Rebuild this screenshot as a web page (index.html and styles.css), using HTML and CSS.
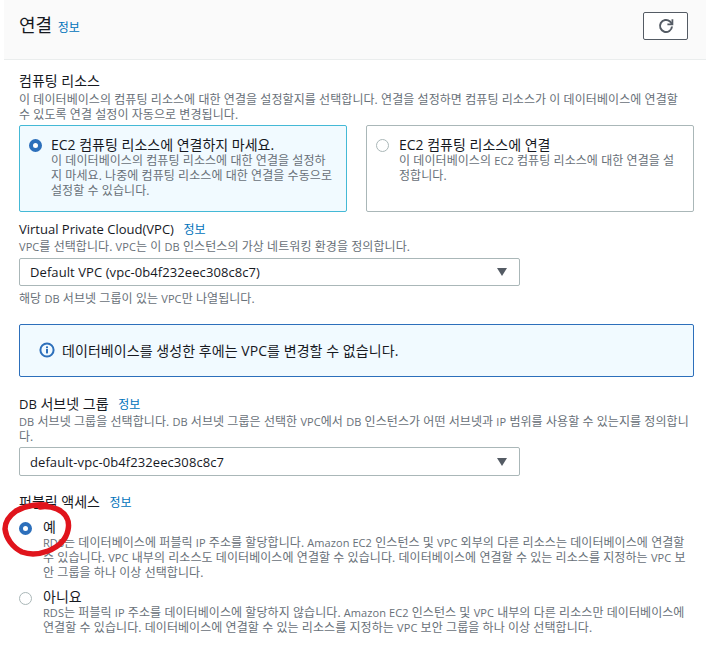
FILE: index.html
```html
<!DOCTYPE html>
<html lang="ko">
<head>
<meta charset="utf-8">
<title>연결</title>
<link rel="stylesheet" href="styles.css">
</head>
<body>
<div class="panel">
  <header class="head">
    <h2 class="title">연결 <a class="info info-head">정보</a></h2>
    <button class="refresh" aria-label="새로 고침">
      <svg width="16" height="16" viewBox="0 0 16 16" fill="none" stroke="#545b64" stroke-width="2"><path d="M14 8.5a6 6 0 1 1-2-5L14 6"/><path d="M14.4 1.2V6.4H9.4" stroke-width="1.8"/></svg>
    </button>
  </header>
  <div class="content">
    <section class="field f-compute">
      <div class="label">컴퓨팅 리소스</div>
      <p class="desc">이 데이터베이스의 컴퓨팅 리소스에 대한 연결을 설정할지를 선택합니다. 연결을 설정하면 컴퓨팅 리소스가 이 데이터베이스에 연결할<br>수 있도록 연결 설정이 자동으로 변경됩니다.</p>
      <div class="cards">
        <div class="card card-on">
          <span class="radio radio-on"></span>
          <div>
            <div class="opt">EC2 컴퓨팅 리소스에 연결하지 마세요.</div>
            <p class="desc">이 데이터베이스의 컴퓨팅 리소스에 대한 연결을 설정하<br>지 마세요. 나중에 컴퓨팅 리소스에 대한 연결을 수동으로<br>설정할 수 있습니다.</p>
          </div>
        </div>
        <div class="card card-off">
          <span class="radio"></span>
          <div>
            <div class="opt">EC2 컴퓨팅 리소스에 연결</div>
            <p class="desc">이 데이터베이스의 <span class="en">EC2</span> 컴퓨팅 리소스에 대한 연결을 설<br>정합니다.</p>
          </div>
        </div>
      </div>
    </section>
    <section class="field f-vpc">
      <div class="label"><span class="en">Virtual Private Cloud(VPC)</span> <a class="info">정보</a></div>
      <p class="desc"><span class="en">VPC</span>를 선택합니다. <span class="en">VPC</span>는 이 <span class="en">DB</span> 인스턴스의 가상 네트워킹 환경을 정의합니다.</p>
      <div class="select select-vpc"><span>Default VPC (vpc-0b4f232eec308c8c7)</span><i class="caret"></i></div>
      <p class="desc hint">해당 <span class="en">DB</span> 서브넷 그룹이 있는 <span class="en">VPC</span>만 나열됩니다.</p>
    </section>
    <div class="alert">
      <svg class="alert-icon" width="16" height="16" viewBox="0 0 16 16"><circle cx="8" cy="8" r="6.6" fill="none" stroke="#2c6fbb" stroke-width="2"/><rect x="7" y="7" width="2" height="4.4" fill="#2c6fbb"/><rect x="7" y="4.4" width="2" height="1.8" fill="#2c6fbb"/></svg>
      <span>데이터베이스를 생성한 후에는 VPC를 변경할 수 없습니다.</span>
    </div>
    <section class="field f-subnet">
      <div class="label"><span class="en">DB</span> 서브넷 그룹 <a class="info">정보</a></div>
      <p class="desc"><span class="en">DB</span> 서브넷 그룹을 선택합니다. <span class="en">DB</span> 서브넷 그룹은 선택한 <span class="en">VPC</span>에서 <span class="en">DB</span> 인스턴스가 어떤 서브넷과 <span class="en">IP</span> 범위를 사용할 수 있는지를 정의합니<br>다.</p>
      <div class="select"><span>default-vpc-0b4f232eec308c8c7</span><i class="caret"></i></div>
    </section>
    <section class="field f-public">
      <div class="label">퍼블릭 액세스 <a class="info">정보</a></div>
      <div class="choice">
        <span class="radio radio-on"></span>
        <div>
          <div class="opt">예</div>
          <p class="desc"><span class="en">RDS</span>는 데이터베이스에 퍼블릭 <span class="en">IP</span> 주소를 할당합니다. <span class="en">Amazon EC2</span> 인스턴스 및 <span class="en">VPC</span> 외부의 다른 리소스는 데이터베이스에 연결할<br>수 있습니다. <span class="en">VPC</span> 내부의 리소스도 데이터베이스에 연결할 수 있습니다. 데이터베이스에 연결할 수 있는 리소스를 지정하는 <span class="en">VPC</span> 보<br>안 그룹을 하나 이상 선택합니다.</p>
        </div>
      </div>
      <div class="choice choice-no">
        <span class="radio"></span>
        <div>
          <div class="opt">아니요</div>
          <p class="desc"><span class="en">RDS</span>는 퍼블릭 <span class="en">IP</span> 주소를 데이터베이스에 할당하지 않습니다. <span class="en">Amazon EC2</span> 인스턴스 및 <span class="en">VPC</span> 내부의 다른 리소스만 데이터베이스에<br>연결할 수 있습니다. 데이터베이스에 연결할 수 있는 리소스를 지정하는 <span class="en">VPC</span> 보안 그룹을 하나 이상 선택합니다.</p>
        </div>
      </div>
    </section>
  </div>
</div>
<svg class="scribble" width="76" height="60" viewBox="0 0 76 60" fill="none" stroke="#e0141c" stroke-width="5.5" stroke-linecap="round" stroke-linejoin="round"><path d="M46 5C36 4 25 6 16 11C9 16 5 22 5 29C6 38 12 47 22 52C30 55 40 54 48 51C58 47 66 40 68 30C70 21 66 13 57 9C52 7 46 6 40 7"/></svg>
</body>
</html>
```
FILE: styles.css
```css
* { box-sizing: border-box; }
html, body { margin: 0; padding: 0; }
body {
  width: 706px;
  height: 645px;
  overflow: hidden;
  position: relative;
  background: #fff;
  color: #16191f;
  font-family: "Open Sans", "Noto Sans CJK KR", sans-serif;
  font-size: 12px;
}
p { margin: 0; }
.panel { margin-left: 4px; }
.head {
  height: 60px;
  background: #fafafa;
  border-bottom: 1px solid #eaeded;
  padding: 12px 18px 0 15px;
  display: flex;
  justify-content: space-between;
  align-items: flex-start;
}
.title { margin: 2px 0 0; font-size: 18px; font-weight: 400; line-height: 22px; }
.info { color: #0073bb; font-size: 12px; margin-left: 6px; }
.info-head { margin-left: 1px; }
.refresh {
  width: 45px; height: 28px; padding: 0;
  background: #fff;
  border: 1px solid #545b64;
  border-radius: 2px;
  display: flex; align-items: center; justify-content: center;
}
.content { padding: 12px 12px 0 15px; }
.label { font-size: 14px; line-height: 18px; margin-bottom: 1px; }
.label .en { font-size: 13px; }
.desc { color: #687078; font-size: 12px; line-height: 14.7px; letter-spacing: .07px; white-space: nowrap; }
.desc .en { font-size: 11px; }
.f-compute .label { margin-bottom: 3px; }
.cards { display: flex; gap: 19px; margin-top: 3px; }
.card {
  width: 328px; height: 87px;
  border: 1px solid #aab7b8;
  border-radius: 2px;
  padding: 10px 12px 0 9px;
  display: flex; gap: 9px;
}
.card-on { border-color: #44b9d6; background: #f1faff; }
.card-off { gap: 10px; }
.radio {
  flex: none;
  width: 13px; height: 13px; margin-top: 3px;
  border-radius: 50%;
  border: 1px solid #aab7b8;
  background: #fff;
}
.radio-on { border: 4px solid #2c6fbb; }
.opt { font-size: 14px; line-height: 17px; margin-bottom: 1px; }
.f-vpc { margin-top: 8px; }
.select {
  width: 501px; height: 29px; margin-top: 3px;
  border: 1px solid #aab7b8;
  border-radius: 2px;
  padding: 0 10px;
  display: flex; align-items: center; justify-content: space-between;
  font-size: 13px; letter-spacing: .08px;
}
.select-vpc { height: 28px; }
.caret { width: 0; height: 0; border: 5px solid transparent; border-top: 8px solid #545b64; border-bottom: 0; margin-right: 2px; }
.hint { margin-top: 6px; }
.alert {
  margin-top: 17px;
  width: 675px; height: 53px;
  background: #f1faff;
  border: 1px solid #2c6fbb;
  border-radius: 2px;
  padding: 0 19px;
  display: flex; align-items: center; gap: 7px;
  font-size: 14px; letter-spacing: .06px;
}
.f-subnet { margin-top: 18px; }
.f-public { margin-top: 17px; }
.choice { display: flex; gap: 11px; margin-top: 6px; }
.choice .radio { margin-top: 4px; }
.choice-no { margin-top: 8px; }
.scribble { position: absolute; left: 0; top: 500px; }
```
